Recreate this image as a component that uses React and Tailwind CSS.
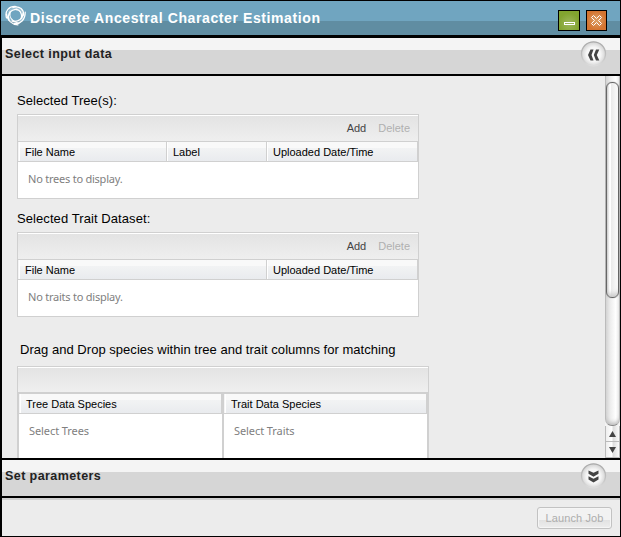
import React from "react";

const arial = "font-['Liberation_Sans',Arial,sans-serif]";

function Logo() {
  return (
    <svg width="21" height="21" viewBox="0 0 21 21" fill="none" stroke="#fff" strokeLinecap="round" className="mt-[4px] ml-[4px] shrink-0">
      <circle cx="10.500" cy="10.500" r="7.600" strokeWidth="2" opacity=".3" />
      <path d="M1.500 13C-.5 6 4 1 11 1.500" strokeWidth="1.200" />
      <path d="M3.800 15C2.500 9 5 5 12 4.200" strokeWidth="1.300" />
      <path d="M8 2.300C15 .5 19 5 18.500 10" strokeWidth="1.300" />
      <path d="M11 4.500C15 4.500 17 8 16.500 13" strokeWidth="1.300" />
      <path d="M20.200 7C20.500 14 16 19.500 9 18.500" strokeWidth="1.200" />
      <path d="M18.200 8C18 13 14 17.500 7 16" strokeWidth="1.300" />
      <path d="M1.300 9C3 16 6 19.500 13 19.800" strokeWidth="1.200" />
      <path d="M5 7C4 12 7 16 12 17.500" strokeWidth="1.300" />
    </svg>
  );
}

function SectionHeader({ title, direction }) {
  return (
    <div className="flex h-9 shrink-0 justify-between bg-[linear-gradient(#f4f4f4_12px,#d6d6d6_12px)]">
      <span className="pl-[3px] pt-[8px] text-[12.5px] leading-[16px] font-bold tracking-[0.42px] text-[#222]">{title}</span>
      <svg width="28" height="28" viewBox="0 0 28 28" className="mt-[3px] mr-[12px]">
        <defs>
          <radialGradient id={`disc-${direction}`} cx="50%" cy="52%">
            <stop offset="0" stopColor="#fff" />
            <stop offset=".6" stopColor="#f5f5f5" />
            <stop offset="1" stopColor="#d4d4d4" />
          </radialGradient>
          <linearGradient id={`rim-${direction}`} x2="0" y2="1">
            <stop offset="0" stopColor="#a9a9a9" />
            <stop offset=".6" stopColor="#c2c2c2" />
            <stop offset="1" stopColor="#ddd" />
          </linearGradient>
        </defs>
        <circle cx="13.500" cy="12.800" r="12" fill={`url(#disc-${direction})`} stroke={`url(#rim-${direction})`} strokeWidth="1.300" />
        {direction === "left" ? (
          <path d="M10.500 8.500H13.500L11.500 14L13.500 19.500H10.500L8 14ZM16 8.500H19.300L16.800 14L19.300 19.500H16L13.800 14Z" fill="#444" />
        ) : (
          <path d="M8.500 7.500L13.500 9.800L18.500 7.500V10.700L13.500 13.700L8.500 10.700ZM8.500 13.300L13.500 15.700L18.500 13.300V16.500L13.500 19.500L8.500 16.500Z" fill="#444" />
        )}
      </svg>
    </div>
  );
}

function Column({ width, label }) {
  return (
    <div className={`${width} h-[19px] whitespace-nowrap border-l border-white border-r border-r-[#d0d0d0] pl-[5px] text-[11px] leading-[20px] text-black bg-[linear-gradient(#f9f9f9_6px,#f2f3f4_6px,#e9ebee)]`}>
      {label}
    </div>
  );
}

function EmptyText({ children, spacing }) {
  return (
    <div className={`pl-[10px] pt-[9px] font-['Noto_Sans',sans-serif] text-[11px] leading-[16px] text-[#808080] ${spacing}`}>{children}</div>
  );
}

function DataTable({ columns, empty }) {
  return (
    <div className="h-[85px] w-[402px] border border-[#d0d0d0] bg-white">
      <div className="flex h-[27px] justify-end gap-[12px] border-t border-b border-t-white border-b-[#d0d0d0] bg-[linear-gradient(#e3e3e3,#efefef)] pr-[8px] text-[11px] leading-[25px]">
        <span className="text-[#444]">Add</span>
        <span className="text-[#b0b0b0]">Delete</span>
      </div>
      <div className="flex h-[20px] border-b border-[#d0d0d0] bg-[#f4f4f5] pl-px">
        {columns.map((c) => <Column key={c.label} {...c} />)}
      </div>
      <EmptyText spacing="tracking-[-0.23px]">{empty}</EmptyText>
    </div>
  );
}

function Scrollbar() {
  return (
    <div className="flex h-full w-[15px] shrink-0 flex-col bg-[#f4f4f4]">
      <div className="h-[350px] rounded-b-[7px] border-x border-b border-x-[#bbb] border-b-[#888] bg-[linear-gradient(90deg,#d4d4d4,#eee_35%,#fff_75%,#eaeaea)] pt-[6px] shadow-[inset_0_-5px_4px_-3px_#bbb]">
        <div className="h-[216px] rounded-[6px] border border-[#666] bg-[linear-gradient(90deg,#ccc,#fff_25%,#fff_32%,#ebebeb_40%,#f5f5f5_75%,#fff)] shadow-[inset_0_-5px_4px_-2px_#ccc,0_0_1px_#777]" />
      </div>
      <div className="flex h-4 items-center justify-center border-x border-b border-[#bbb] bg-[linear-gradient(90deg,#eee,#fff_45%,#ddd_55%,#fafafa)]">
        <svg width="7" height="6"><path d="M3.500 0L7 6H0Z" fill="#444" /></svg>
      </div>
      <div className="flex h-4 items-center justify-center border-x border-b border-[#bbb] bg-[linear-gradient(90deg,#eee,#fff_45%,#ddd_55%,#fafafa)]">
        <svg width="7" height="6"><path d="M3.500 6L7 0H0Z" fill="#444" /></svg>
      </div>
    </div>
  );
}

export default function App() {
  return (
    <div className={`flex h-[537px] w-[621px] flex-col overflow-hidden border border-black bg-black ${arial}`}>
      <div className="flex h-[34px] shrink-0 bg-[linear-gradient(#70a5c0_20px,#608da2_20px)]">
        <Logo />
        <h1 className="ml-[4px] flex-1 whitespace-nowrap pt-[9px] text-[14px] leading-[16px] font-bold tracking-[0.6px] text-white">Discrete Ancestral Character Estimation</h1>
        <div className="mr-[13px] mt-[9px] flex gap-[6px]">
          <button aria-label="Minimize" className="flex h-[21px] w-[22px] justify-center border border-black bg-[radial-gradient(circle_at_50%_65%,#9ab456_10%,#82a42f_65%)] pt-[11px]">
            <span className="h-[3px] w-[11px] border border-white" />
          </button>
          <button aria-label="Close" className="flex h-[21px] w-[21px] items-center justify-center border border-black bg-[radial-gradient(circle,#db995f_15%,#d47430_70%)]">
            <svg width="13" height="13" viewBox="0 0 13 13" fill="none" stroke="#fff">
              <path d="M3.500 1.500L6.500 4.500L9.500 1.500L11.500 3.500L8.500 6.500L11.500 9.500L9.500 11.500L6.500 8.500L3.500 11.500L1.500 9.500L4.500 6.500L1.500 3.500Z" />
            </svg>
          </button>
        </div>
      </div>
      <div className="ml-px mt-[3px] flex min-h-0 flex-1 flex-col">
        <SectionHeader title="Select input data" direction="left" />
        <main className="mt-[2px] flex h-[382px] shrink-0 overflow-hidden bg-[#ececec]">
          <div className="h-full flex-1 overflow-hidden pl-[15px] pt-[17px]">
            <div className="h-[21px] text-[13px] leading-[16px] tracking-[0.05px]">Selected Tree(s):</div>
            <DataTable empty="No trees to display." columns={[
              { width: "w-[148px]", label: "File Name" },
              { width: "w-[100px]", label: "Label" },
              { width: "w-[151px]", label: "Uploaded Date/Time" },
            ]} />
            <div className="mt-[12px] h-[21px] text-[13px] leading-[16px] tracking-[0.08px]">Selected Trait Dataset:</div>
            <DataTable empty="No traits to display." columns={[
              { width: "w-[248px]", label: "File Name" },
              { width: "w-[151px]", label: "Uploaded Date/Time" },
            ]} />
            <div className="mt-[25px] h-[24px] pl-[3px] text-[13px] leading-[16px] tracking-[0.03px]">Drag and Drop species within tree and trait columns for matching</div>
            <div className="h-[120px] w-[412px] border border-[#d0d0d0] bg-[#d0d0d0]">
              <div className="h-[25px] border-t border-white bg-[linear-gradient(#e3e3e3,#efefef)]" />
              <div className="mt-[2px] flex h-[90px] gap-[2px] px-px">
                {[["Tree Data Species", "Select Trees"], ["Trait Data Species", "Select Traits"]].map(([title, empty]) => (
                  <div key={title} className="w-[203px] bg-white">
                    <div className="flex h-[20px] border-b border-[#d0d0d0] bg-[#f4f4f5] pl-px">
                      <Column width="w-[202px]" label={title} />
                    </div>
                    <EmptyText spacing="tracking-[-0.08px]">{empty}</EmptyText>
                  </div>
                ))}
              </div>
            </div>
          </div>
          <Scrollbar />
        </main>
        <div className="h-[2px] shrink-0" />
        <SectionHeader title="Set parameters" direction="down" />
        <footer className="mt-[2px] flex h-[38px] justify-end border-t-2 border-[#d0d0d0] bg-[#ececec] pr-[8px] pt-[7px]">
          <button className="h-[22px] w-[75px] whitespace-nowrap rounded-[3px] border border-[#c2c2c2] bg-[linear-gradient(#f2f2f2_12px,#e2e2e2_12px,#ededed)] text-[11px] leading-[20px] tracking-[0.1px] text-[#adadad] shadow-[inset_0_0_0_1px_#f5f5f5]">Launch Job</button>
        </footer>
      </div>
    </div>
  );
}
